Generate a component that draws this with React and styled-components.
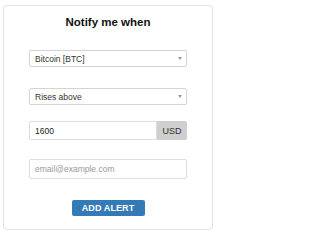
import styled, { createGlobalStyle } from 'styled-components';

const GlobalStyle = createGlobalStyle`
  html, body {
    margin: 0;
    padding: 0;
    background: #fff;
    font-family: 'Liberation Sans', Arial, sans-serif;
  }
`;

const Card = styled.div`
  box-sizing: border-box;
  width: 210px;
  height: 225px;
  margin: 5px 3px;
  padding: 9px 0 0;
  border: 1px solid #e2e2e2;
  border-radius: 4px;
  display: flex;
  flex-direction: column;
  align-items: center;
`;

const Title = styled.h2`
  margin: 0;
  font-size: 11.5px;
  line-height: 14px;
  font-weight: 700;
  color: #111;
`;

const Field = styled.div`
  position: relative;
  width: 158px;
  margin-top: ${(p) => p.$gap}px;
`;

const Select = styled.select`
  box-sizing: border-box;
  display: block;
  width: 100%;
  height: 17px;
  padding: 0 0 0 5px;
  appearance: none;
  border: 1px solid #d4d4d4;
  border-radius: 2px;
  background: #fff;
  font-family: inherit;
  font-size: 8.5px;
  color: #333;
  outline: none;
`;

const Caret = styled.span`
  position: absolute;
  right: 5px;
  top: 7px;
  width: 0;
  height: 0;
  border-left: 2.5px solid transparent;
  border-right: 2.5px solid transparent;
  border-top: 3px solid #999;
  pointer-events: none;
`;

const InputGroup = styled.div`
  display: flex;
  width: 158px;
  height: 19px;
  margin-top: 16px;
`;

const Input = styled.input`
  box-sizing: border-box;
  flex: 1;
  min-width: 0;
  height: ${(p) => p.$height || 19}px;
  width: ${(p) => (p.$full ? '158px' : 'auto')};
  margin: 0;
  padding: 0 5px;
  border: 1px solid #ddd;
  border-radius: ${(p) => (p.$full ? '2px' : '2px 0 0 2px')};
  font-family: inherit;
  font-size: 8.5px;
  color: #222;
  outline: none;

  &::placeholder {
    color: #999;
  }
`;

const Addon = styled.span`
  box-sizing: border-box;
  width: 30px;
  height: 19px;
  display: flex;
  align-items: center;
  justify-content: center;
  background: #cfcfcf;
  border-radius: 0 2px 2px 0;
  font-size: 9px;
  color: #333;
`;

const EmailWrap = styled.div`
  display: flex;
  width: 158px;
  margin-top: 19px;
`;

const Button = styled.button`
  box-sizing: border-box;
  width: 73px;
  height: 16px;
  margin-top: 21px;
  padding: 0;
  border: none;
  border-radius: 2px;
  background: #337ab7;
  color: #fff;
  font-family: inherit;
  font-size: 9px;
  font-weight: 700;
  letter-spacing: 0.1px;
`;

export default function App() {
  return (
    <>
      <GlobalStyle />
      <Card>
        <Title>Notify me when</Title>

        {/* coin */}
        <Field $gap={21}>
          <Select defaultValue="btc">
            <option value="btc">Bitcoin [BTC]</option>
          </Select>
          <Caret />
        </Field>

        {/* condition */}
        <Field $gap={21}>
          <Select defaultValue="above">
            <option value="above">Rises above</option>
          </Select>
          <Caret />
        </Field>

        {/* price */}
        <InputGroup>
          <Input defaultValue="1600" />
          <Addon>USD</Addon>
        </InputGroup>

        {/* email */}
        <EmailWrap>
          <Input $full $height={20} placeholder="email@example.com" />
        </EmailWrap>

        <Button>ADD ALERT</Button>
      </Card>
    </>
  );
}
